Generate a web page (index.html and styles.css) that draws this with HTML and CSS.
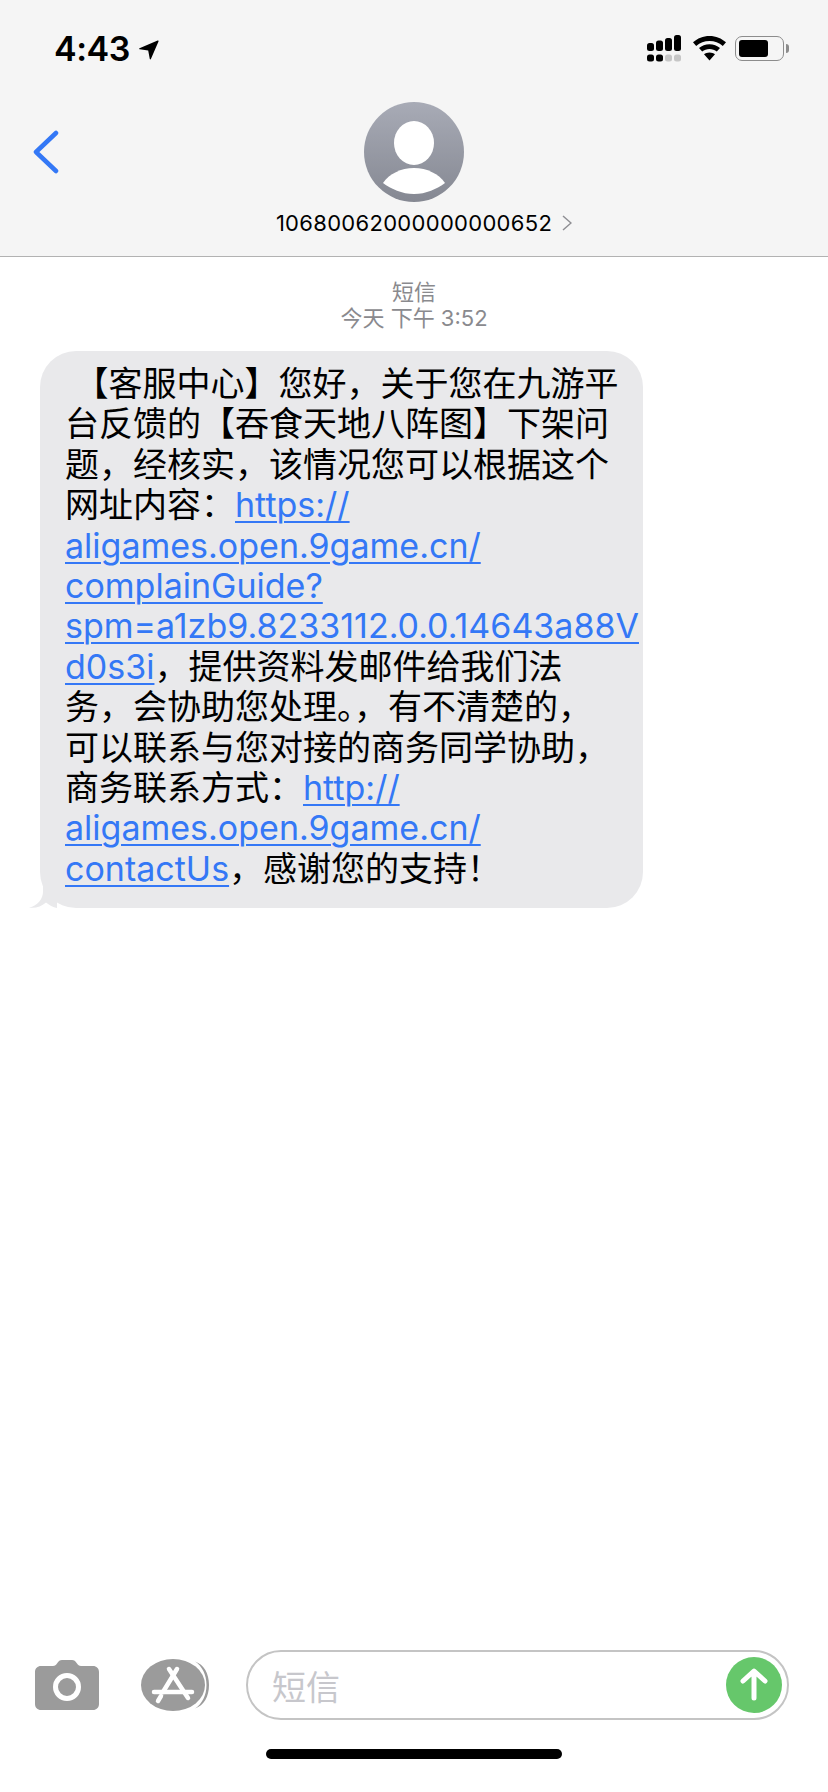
FILE: index.html
```html
<!DOCTYPE html>
<html lang="zh">
<head>
  <meta charset="utf-8">
  <title>短信</title>
  <link rel="stylesheet" href="styles.css">
</head>
<body>
  <div class="phone">
    <div class="top">
      <div class="status">
        <div class="clock">
          <span>4:43</span>
          <svg class="arrow" width="22" height="22" viewBox="0 0 22 22"><path d="M1.5 10.2 19.6 2.6c.6-.3 1.1.2.9.9L12.9 21c-.3.6-1 .5-1.1-.1l-1.6-8.4-8.5-1.2c-.6-.1-.8-.9-.2-1.100z"/></svg>
        </div>
        <div class="status-icons">
          <svg width="34" height="27" viewBox="0 0 34 27">
            <rect x="0" y="8" width="7" height="8" rx="2.500"/>
            <rect x="9" y="5.500" width="7" height="10.500" rx="2.500"/>
            <rect x="18" y="3" width="7" height="13" rx="2.500"/>
            <rect x="27" y="0" width="7" height="16" rx="2.500"/>
            <rect x="0" y="19.500" width="7" height="7" rx="2.500"/>
            <rect x="9" y="19.500" width="7" height="7" rx="2.500"/>
            <rect x="18" y="19.500" width="7" height="7" rx="2.500" fill="#c6c6c6"/>
            <rect x="27" y="19.500" width="7" height="7" rx="2.500" fill="#c6c6c6"/>
          </svg>
          <svg class="wifi" width="33" height="25" viewBox="0 0 33 25">
            <path d="M16.500 0C10 0 4.600 2.400 0 6.300l3.200 3.600C7 6.800 11.400 5 16.500 5s9.500 1.800 13.300 4.900L33 6.300C28.400 2.400 23 0 16.500 0z"/>
            <path d="M16.500 8.200c-4.100 0-7.600 1.400-10.500 3.700l3.200 3.600c2-1.500 4.500-2.400 7.300-2.400s5.300.9 7.300 2.400l3.200-3.600c-2.900-2.300-6.400-3.700-10.500-3.700z"/>
            <path d="M16.500 16.400c-2.200 0-4 .7-5.500 1.800l5.500 6.300 5.500-6.300c-1.500-1.100-3.300-1.800-5.500-1.800z"/>
          </svg>
          <div class="battery">
            <div class="battery-level"></div>
          </div>
          <div class="battery-cap"></div>
        </div>
      </div>
      <div class="nav">
        <svg class="back" width="28" height="44" viewBox="0 0 28 44"><path d="M24 3 4 22l20 19" fill="none" stroke="#3478f6" stroke-width="4.500" stroke-linecap="round" stroke-linejoin="round"/></svg>
        <svg class="avatar" width="100" height="100" viewBox="0 0 100 100">
          <defs>
            <linearGradient id="avatarFill" x1="0" y1="0" x2="0" y2="1">
              <stop offset="0" stop-color="#a8abb6"/>
              <stop offset="1" stop-color="#858892"/>
            </linearGradient>
            <clipPath id="avatarClip"><circle cx="50" cy="50" r="50"/></clipPath>
          </defs>
          <circle cx="50" cy="50" r="50" fill="url(#avatarFill)"/>
          <ellipse cx="50" cy="41" rx="20" ry="22" fill="#fff"/>
          <path d="M19 81c6-9 18-15 31-15s25 6 31 15c-8 6-19 11-31 11s-23-5-31-11z" fill="#fff"/>
        </svg>
        <div class="contact">
          <span>10680062000000000652</span>
          <svg width="10" height="16" viewBox="0 0 10 16"><path d="M1 1l8 7-8 7" fill="none" stroke="#8e8e93" stroke-width="1.500"/></svg>
        </div>
      </div>
    </div>

    <div class="thread">
      <div class="stamp">
        <div>短信</div>
        <div>今天 下午 3:52</div>
      </div>
      <div class="bubble">
        <svg class="tail" width="28" height="24" viewBox="0 0 28 24"><path d="M14 0v8c0 6-5 14-14 15.500C6 24.500 12 23 17 18.500 20 21 24 23.500 28 24V0z" fill="#e9e9eb"/></svg>
        <p class="message">&nbsp;【客服中心】您好，关于您在九游平<br>台反馈的【吞食天地八阵图】下架问<br>题，经核实，该情况您可以根据这个<br>网址内容：<a href="#">https://</a><br><a href="#">aligames.open.9game.cn/</a><br><a href="#">complainGuide?</a><br><a href="#">spm=a1zb9.8233112.0.0.14643a88V</a><br><a href="#">d0s3i</a>，提供资料发邮件给我们法<br>务，会协助您处理。，有不清楚的，<br>可以联系与您对接的商务同学协助，<br>商务联系方式：<a href="#">http://</a><br><a href="#">aligames.open.9game.cn/</a><br><a href="#">contactUs</a>，感谢您的支持！</p>
      </div>
    </div>

    <div class="composer">
      <svg class="camera" width="64" height="50" viewBox="0 0 64 50">
        <path d="M6 6h12c2 0 3-1 4-2.500C23.500 1 25 0 27 0h10c2 0 3.500 1 5 3.500C43 5 44 6 46 6h12c3.500 0 6 2.500 6 6v32c0 3.500-2.500 6-6 6H6c-3.500 0-6-2.500-6-6V12c0-3.500 2.500-6 6-6z" fill="#9b9b9b"/>
        <circle cx="32" cy="27" r="11.500" fill="none" stroke="#fff" stroke-width="5"/>
      </svg>
      <svg class="store" width="72" height="52" viewBox="0 0 72 52">
        <path d="M54 2.500c9 3 14 12 14 23.500s-5 20.500-14 23.500c7-4.500 11.500-13 11.500-23.500S61 7 54 2.500z" fill="#9b9b9b"/>
        <ellipse cx="32" cy="26" rx="32" ry="26" fill="#9b9b9b"/>
        <g fill="none" stroke="#fff" stroke-width="4.500" stroke-linecap="round">
          <path d="M28 10l19 29"/>
          <path d="M36 10 22 33"/>
          <path d="M13 33h38"/>
          <path d="M20 37l-3 5"/>
        </g>
      </svg>
      <div class="input">
        <span class="placeholder">短信</span>
        <div class="send">
          <svg width="56" height="56" viewBox="0 0 56 56"><path d="M28 41V15M17 24l11-10 11 10" fill="none" stroke="#fff" stroke-width="5" stroke-linecap="round" stroke-linejoin="round"/></svg>
        </div>
      </div>
    </div>
    <div class="home-row">
      <div class="home-bar"></div>
    </div>
  </div>
</body>
</html>
```

FILE: styles.css
```css
html, body {
  margin: 0;
  padding: 0;
  background: #fff;
}

body {
  font-family: Inter, "Noto Sans CJK SC", sans-serif;
  color: #000;
}

.phone {
  width: 828px;
  height: 1792px;
  display: flex;
  flex-direction: column;
  overflow: hidden;
}

/* status bar + contact header */
.top {
  background: #f5f5f5;
  border-bottom: 1px solid #b2b2b2;
  height: 256px;
}

.status {
  height: 88px;
  padding: 0 39px 0 54px;
  display: flex;
  justify-content: space-between;
  align-items: center;
  box-sizing: border-box;
  padding-top: 9px;
}

.clock {
  display: flex;
  align-items: center;
  gap: 8px;
  font-size: 34px;
  font-weight: 600;
  letter-spacing: -0.5px;
}

.status-icons {
  display: flex;
  align-items: center;
}

.wifi {
  margin-left: 12px;
}

.battery {
  margin-left: 9px;
  width: 48px;
  height: 25px;
  border: 1.500px solid #8c8c8c;
  border-radius: 7px;
  padding: 3px;
  box-sizing: content-box;
  width: 41px;
  height: 17px;
}

.battery-level {
  width: 29px;
  height: 17px;
  background: #000;
  border-radius: 3px;
}

.battery-cap {
  width: 3px;
  height: 9px;
  margin-left: 2px;
  background: #8c8c8c;
  border-radius: 0 3px 3px 0;
}

.nav {
  position: relative;
  display: flex;
  flex-direction: column;
  align-items: center;
  padding-top: 14px;
}

.back {
  position: absolute;
  left: 32px;
  top: 42px;
}

.contact {
  margin-top: 8px;
  display: flex;
  align-items: center;
  gap: 10px;
  font-size: 22px;
  letter-spacing: 0.3px;
  margin-left: 20px;
}

/* message list */
.thread {
  flex: 1;
  padding-top: 22px;
}

.stamp {
  text-align: center;
  font-size: 22px;
  line-height: 26px;
  color: #8a8a8e;
}

.bubble {
  position: relative;
  margin: 20px 0 0 40px;
  width: 603px;
  height: 557px;
  background: #e9e9eb;
  border-radius: 36px;
  box-sizing: border-box;
  padding: 13px 0 0 25px;
}

.tail {
  position: absolute;
  left: -11px;
  bottom: 0;
}

.message {
  position: relative;
  margin: 0;
  font-size: 34px;
  line-height: 40.400px;
  white-space: nowrap;
}

.message a {
  color: #3478f6;
  text-decoration: underline;
  text-decoration-thickness: 2px;
  text-underline-offset: 4px;
}

/* input row */
.composer {
  display: flex;
  align-items: center;
  padding-left: 35px;
  height: 70px;
}

.camera {
  flex: none;
}

.store {
  flex: none;
  margin-left: 42px;
}

.input {
  flex: none;
  margin-left: 33px;
  width: 543px;
  height: 70px;
  box-sizing: border-box;
  border: 2px solid #c4c4c4;
  border-radius: 35px;
  display: flex;
  align-items: center;
  justify-content: space-between;
  padding: 0 5px 0 24px;
}

.placeholder {
  font-size: 34px;
  color: #c7c7cc;
}

.send {
  width: 56px;
  height: 56px;
  border-radius: 50%;
  background: #66c76b;
}

.send svg {
  display: block;
}

.home-row {
  height: 72px;
  display: flex;
  justify-content: center;
  padding-top: 0;
  margin-top: 0;
}

.home-bar {
  margin-top: 29px;
  width: 296px;
  height: 10px;
  background: #000;
  border-radius: 5px;
}
```
